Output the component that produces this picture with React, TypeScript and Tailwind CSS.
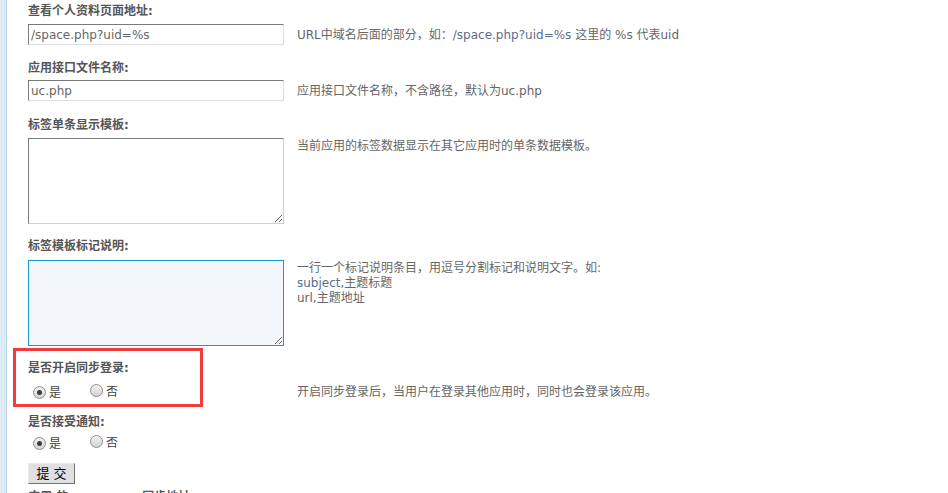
import React from "react";

const font = { fontFamily: '"DejaVu Sans", "Noto Sans CJK SC", sans-serif' };

function Radio({ checked, label }: { checked?: boolean; label: string }) {
  return (
    <span className="inline-flex items-center">
      <span className="relative inline-flex h-[13px] w-[13px] items-center justify-center rounded-full border border-[#8f8f8f] bg-linear-to-b from-[#f2f2f2] to-[#d4d4d4]">
        {checked && <span className="h-[5px] w-[5px] rounded-full bg-[#3c3c3c]" />}
      </span>
      <span className="ml-[3px] mt-[2px] text-[12px] leading-[16px] text-[#444]">{label}</span>
    </span>
  );
}

function Label({ children, className = "" }: { children: React.ReactNode; className?: string }) {
  return (
    <div className={"text-[12px] font-bold leading-[16px] text-[#555] " + className}>{children}</div>
  );
}

const inputCls =
  "box-border h-[21px] w-[256px] border border-t-[#7a7a7a] border-l-[#7a7a7a] border-r-[#dedede] border-b-[#dedede] bg-white px-[2px] text-[12px] text-[#666] outline-none";

export default function App() {
  return (
    <div className="flex min-h-screen bg-white" style={font}>
      <div className="w-[6px] shrink-0 bg-[#dcebf6]" />
      <div className="w-px shrink-0 bg-[#b9d3e7]" />
      <div className="relative flex-1 pl-[21px] pt-[3px] text-[12px] text-[#666]">
        {/* 1 */}
        <Label>查看个人资料页面地址:</Label>
        <div className="mt-[5px] flex items-center">
          <input className={inputCls} defaultValue="/space.php?uid=%s" style={font} />
          <span className="ml-[13px] leading-[16px]">
            URL中域名后面的部分，如：<span className="text-[#5a6e8c]">/space.php?uid=%s</span> 这里的 %s 代表uid
          </span>
        </div>

        {/* 2 */}
        <Label className="mt-[15px]">应用接口文件名称:</Label>
        <div className="mt-[4px] flex items-center">
          <input className={inputCls} defaultValue="uc.php" style={font} />
          <span className="ml-[13px] leading-[16px]">应用接口文件名称，不含路径，默认为uc.php</span>
        </div>

        {/* 3 */}
        <Label className="mt-[16px]">标签单条显示模板:</Label>
        <div className="mt-[5px] flex items-start">
          <textarea
            className="box-border block h-[86px] w-[256px] border border-t-[#7a7a7a] border-l-[#7a7a7a] border-r-[#d0d0d0] border-b-[#d0d0d0] bg-white text-[12px] outline-none"
            style={font}
          />
          <div className="ml-[13px] mt-[1px] leading-[15px]">当前应用的标签数据显示在其它应用时的单条数据模板。</div>
        </div>

        {/* 4 */}
        <Label className="mt-[14px]">标签模板标记说明:</Label>
        <div className="mt-[6px] flex items-start">
          <textarea
            className="box-border block h-[86px] w-[256px] border border-[#1a9ad0] bg-[#f4f8fc] text-[12px] outline-none"
            style={font}
          />
          <div className="ml-[13px] mt-[1px] leading-[15px]">
            <div>一行一个标记说明条目，用逗号分割标记和说明文字。如:</div>
            <div>
              <span className="text-[#5a6e8c]">subject</span>,主题标题
            </div>
            <div>url,主题地址</div>
          </div>
        </div>

        {/* 5 */}
        <Label className="mt-[14px]">是否开启同步登录:</Label>
        <div className="mt-[8px] flex h-[16px] items-center">
          <div className="flex w-[256px] items-center pl-[5px]">
            <Radio checked label="是" />
            <span className="ml-[29px]">
              <Radio label="否" />
            </span>
          </div>
          <span className="ml-[13px] leading-[16px]">开启同步登录后，当用户在登录其他应用时，同时也会登录该应用。</span>
        </div>

        {/* 6 */}
        <Label className="mt-[14px]">是否接受通知:</Label>
        <div className="mt-[5px] flex h-[16px] items-center pl-[5px]">
          <Radio checked label="是" />
          <span className="ml-[29px]">
            <Radio label="否" />
          </span>
        </div>

        <button
          className="mt-[12px] box-border block h-[21px] w-[47px] border border-t-[#e8e8e8] border-l-[#e8e8e8] border-r-[#707070] border-b-[#707070] bg-[#e0e0e0] text-[13px] leading-[18px] text-black"
          style={font}
        >
          提 交
        </button>

        <Label className="mt-[5px]">
          应用 的 <span className="ml-[70px]">同步地址</span>
        </Label>

        {/* red annotation box */}
        <div className="pointer-events-none absolute left-[6px] top-[348px] h-[59px] w-[190px] border-[3px] border-[#f23b3b]" />
      </div>
    </div>
  );
}
